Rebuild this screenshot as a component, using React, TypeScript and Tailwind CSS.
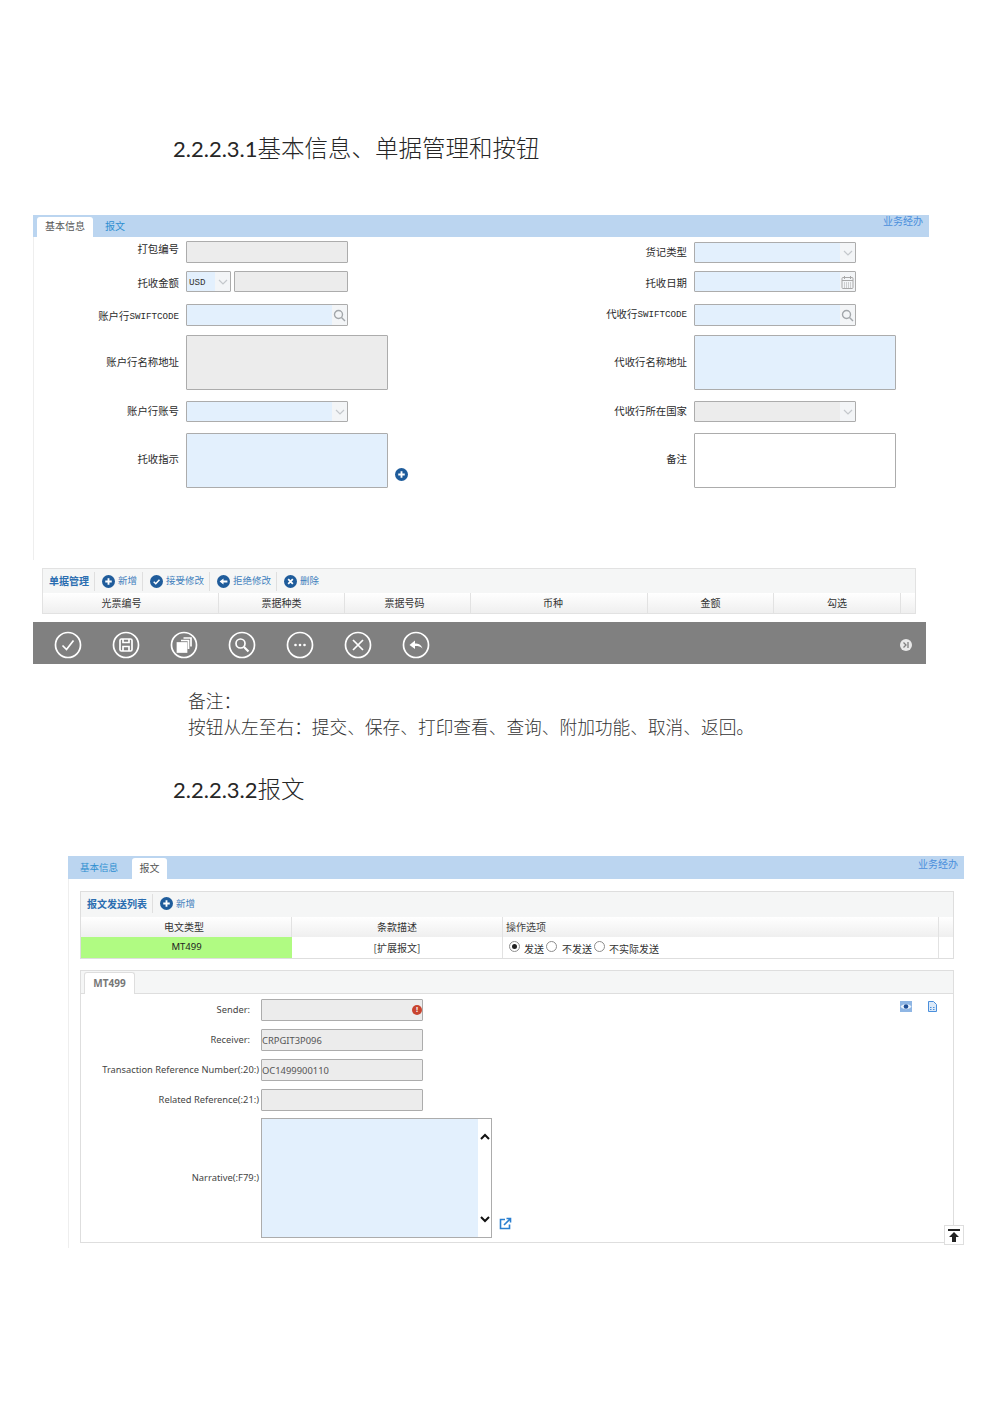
const labelCls = 'text-[10.4px] leading-none text-[#2b2b2b] whitespace-nowrap'

function Code({ children }: { children: string }) {
  return <span className="font-['Liberation_Mono',monospace] text-[9.2px]">{children}</span>
}

function Chevron() {
  return (
    <svg width="10" height="6" viewBox="0 0 10 6" fill="none" stroke="#c4c8cc" strokeWidth="1.2">
      <path d="M1 1l4 4 4-4" />
    </svg>
  )
}

function SearchGlyph() {
  return (
    <svg width="13" height="13" viewBox="0 0 13 13" fill="none" stroke="#a3a7ab" strokeWidth="1.4">
      <circle cx="5.5" cy="5.5" r="4" />
      <path d="M8.5 8.5l3.5 3.5" />
    </svg>
  )
}

function CalendarGlyph() {
  return (
    <svg width="13" height="14" viewBox="0 0 13 14" fill="none" stroke="#a8a8a8">
      <rect x="1" y="2.5" width="11" height="11" rx="1" />
      <path d="M3.5 1v3M9.5 1v3M1 5.5h11" />
      <path d="M3 8h7M3 10h7M3 12h7" strokeDasharray="1 1" />
    </svg>
  )
}

type Fill = 'gray' | 'blue' | 'white'
const fills: Record<Fill, string> = { gray: 'bg-[#ececec]', blue: 'bg-[#e3f0fd]', white: 'bg-white' }

function Box({
  fill,
  className,
  tail,
  children,
}: {
  fill: Fill
  className: string
  tail?: React.ReactNode
  children?: React.ReactNode
}) {
  return (
    <div className={`flex border border-[#acacac] rounded-[1px] shrink-0 ${fills[fill]} ${className}`}>
      <div className="flex-1 flex items-center overflow-hidden">{children}</div>
      {tail && <div className="w-[15px] bg-[#f3f5f7] flex items-center justify-center">{tail}</div>}
    </div>
  )
}

function Field({ label, nudge = '', children }: { label: React.ReactNode; nudge?: string; children: React.ReactNode }) {
  return (
    <div className="flex items-start">
      <div className={`w-[146px] h-[21px] flex items-center justify-end ${labelCls} ${nudge}`}>{label}</div>
      <div className="ml-[7px] flex items-start">{children}</div>
    </div>
  )
}

function RoundIcon({ kind, size = 13 }: { kind: 'plus' | 'check' | 'back' | 'x'; size?: number }) {
  return (
    <svg width={size} height={size} viewBox="0 0 14 14" className="shrink-0">
      <circle cx="7" cy="7" r="7" fill="#1f5c9b" />
      {kind === 'plus' && <path d="M7 3.5v7M3.5 7h7" stroke="#fff" strokeWidth="2" />}
      {kind === 'check' && <path d="M4 7.2l2.2 2.2L10.2 5" stroke="#fff" strokeWidth="1.6" fill="none" />}
      {kind === 'back' && <path d="M2.8 7L7 3.8v2h4.2v2.4H7v2z" fill="#fff" />}
      {kind === 'x' && <path d="M4.5 4.5l5 5M9.5 4.5l-5 5" stroke="#fff" strokeWidth="1.9" />}
    </svg>
  )
}

function ToolButton({ kind, text, sep = true }: { kind: 'plus' | 'check' | 'back' | 'x'; text: string; sep?: boolean }) {
  return (
    <div className={`h-[19px] flex items-center gap-[3px] pl-[7px] pr-[5px] ${sep ? 'border-r border-[#dfdfdf]' : ''}`}>
      <RoundIcon kind={kind} />
      <span className="text-[9.5px] text-[#3f7fbd] leading-none">{text}</span>
    </div>
  )
}

function HeadCell({ text, className }: { text: string; className: string }) {
  return (
    <div className={`h-full flex items-center justify-center pb-[2px] border-r border-[#e2e2e2] text-[10px] text-[#333] ${className}`}>
      {text}
    </div>
  )
}

function BarIcon({ children }: { children: React.ReactNode }) {
  return (
    <svg width="28" height="28" viewBox="0 0 28 28" fill="none" stroke="#fff" strokeWidth="1.7">
      <circle cx="14" cy="14" r="12.5" />
      {children}
    </svg>
  )
}

function Heading({ num, text, className }: { num: string; text: string; className: string }) {
  return (
    <div className={`ml-[173px] h-[30px] flex items-center text-[#262626] whitespace-nowrap ${className}`}>
      <span className="font-['Lato',sans-serif] text-[22px]">{num}</span>
      <span className="text-[23.5px] font-light">{text}</span>
    </div>
  )
}

function Radio({ on }: { on?: boolean }) {
  return (
    <span className="w-[11px] h-[11px] rounded-full border border-[#8d8d8d] bg-white flex items-center justify-center shrink-0 -mt-[3px]">
      {on && <span className="w-[5px] h-[5px] rounded-full bg-[#222]" />}
    </span>
  )
}

function SwiftRow({ label, value, wide }: { label: string; value?: string; wide?: boolean }) {
  return (
    <div className="flex items-start font-['Noto_Sans',sans-serif]">
      <div className={`w-[178px] h-[21px] flex items-center justify-end text-[9.3px] text-[#444] whitespace-nowrap ${wide ? '' : 'pr-[9px]'}`}>
        {label}
      </div>
      <Box fill="gray" className="ml-[2px] w-[162px] h-[22px]">
        <span className="pt-[2px] text-[9.4px] text-[#555]">{value}</span>
      </Box>
    </div>
  )
}

export default function App() {
  return (
    <div className="w-[1000px] h-[1415px] bg-white overflow-hidden font-['Noto_Sans_CJK_SC',sans-serif]">
      <Heading num="2.2.2.3.1" text="基本信息、单据管理和按钮" className="mt-[133px]" />

      {/* first form */}
      <div className="ml-[33px] mt-[52px] w-[896px]">
        <div className="h-[22px] bg-[#bbd5f0] flex items-end relative">
          <div className="ml-[4px] w-[56px] h-[20px] pb-[3px] bg-white rounded-t-[3px] flex items-center justify-center text-[10px] text-[#555]">
            基本信息
          </div>
          <div className="ml-[12px] h-[20px] pb-[3px] flex items-center text-[10px] text-[#2e8fd0]">报文</div>
          <span className="absolute right-[6px] top-0 text-[10px] leading-[12px] text-[#4a8fdc]">业务经办</span>
        </div>
        <div className="h-[323px] border-l border-[#eeeeee] pt-[4px]">
          <div className="-ml-px grid grid-cols-[508px_1fr] grid-rows-[30px_33px_31px_66px_32px_55px]">
            <Field label="打包编号" nudge="pb-[4px]">
              <Box fill="gray" className="w-[162px] h-[22px]" />
            </Field>
            <Field label="货记类型" nudge="pt-[2px]">
              <Box fill="blue" className="w-[162px] h-[21px] mt-px" tail={<Chevron />} />
            </Field>
            <Field label="托收金额" nudge="pt-[3px]">
              <Box fill="blue" className="w-[45px] h-[21px]" tail={<Chevron />}>
                <span className="pl-[2px] pt-[2px] font-['Liberation_Mono',monospace] text-[9.2px] text-[#333]">USD</span>
              </Box>
              <Box fill="gray" className="ml-[3px] w-[114px] h-[21px]" />
            </Field>
            <Field label="托收日期" nudge="pt-[4px]">
              <Box fill="blue" className="w-[162px] h-[21px]" tail={<CalendarGlyph />} />
            </Field>
            <Field label={<>账户行<Code>SWIFTCODE</Code></>} nudge="pt-[4px]">
              <Box fill="blue" className="w-[162px] h-[22px]" tail={<SearchGlyph />} />
            </Field>
            <Field label={<>代收行<Code>SWIFTCODE</Code></>}>
              <Box fill="blue" className="w-[162px] h-[22px]" tail={<SearchGlyph />} />
            </Field>
            <div className="flex items-center h-[55px]">
              <div className={`w-[146px] text-right ${labelCls}`}>账户行名称地址</div>
              <Box fill="gray" className="ml-[7px] w-[202px] h-[55px]" />
            </div>
            <div className="flex items-center h-[55px]">
              <div className={`w-[146px] text-right ${labelCls}`}>代收行名称地址</div>
              <Box fill="blue" className="ml-[7px] w-[202px] h-[55px]" />
            </div>
            <Field label="账户行账号">
              <Box fill="blue" className="w-[162px] h-[21px]" tail={<Chevron />} />
            </Field>
            <Field label="代收行所在国家">
              <Box fill="gray" className="w-[162px] h-[21px]" tail={<Chevron />} />
            </Field>
            <div className="flex items-center h-[55px]">
              <div className={`w-[146px] text-right pb-[2px] ${labelCls}`}>托收指示</div>
              <Box fill="blue" className="ml-[7px] w-[202px] h-[55px]" />
              <div className="ml-[7px] self-end mb-[7px]">
                <RoundIcon kind="plus" />
              </div>
            </div>
            <div className="flex items-center h-[55px]">
              <div className={`w-[146px] text-right pb-[2px] ${labelCls}`}>备注</div>
              <Box fill="white" className="ml-[7px] w-[202px] h-[55px]" />
            </div>
          </div>
        </div>
      </div>

      {/* bills panel */}
      <div className="ml-[42px] mt-[8px] w-[874px] h-[46px] border border-[#e2e2e2] bg-[#f5f6f6]">
        <div className="h-[24px] flex items-center">
          <div className="h-[19px] flex items-center pl-[6px] pr-[5px] pb-[2px] border-r border-[#dfdfdf] text-[10px] font-bold text-[#2a6db0]">
            单据管理
          </div>
          <ToolButton kind="plus" text="新增" />
          <ToolButton kind="check" text="接受修改" />
          <ToolButton kind="back" text="拒绝修改" />
          <ToolButton kind="x" text="删除" sep={false} />
        </div>
        <div className="h-[20px] flex bg-gradient-to-b from-white to-[#efefef]">
          <HeadCell text="光票编号" className="w-[176px] pr-[18px]" />
          <HeadCell text="票据种类" className="w-[126px]" />
          <HeadCell text="票据号码" className="w-[126px] pr-[6px]" />
          <HeadCell text="币种" className="w-[177px] pr-[12px]" />
          <HeadCell text="金额" className="w-[126px]" />
          <HeadCell text="勾选" className="w-[127px]" />
        </div>
      </div>

      {/* action bar */}
      <div className="ml-[33px] mt-[8px] w-[893px] h-[42px] pt-[3px] bg-[#808080] flex items-center pl-[21px] pr-[14px] gap-[30px]">
        <BarIcon><path d="M8.5 14.5l4 4 7-9" /></BarIcon>
        <BarIcon>
          <rect x="8" y="8" width="12" height="12" rx="1.5" />
          <path d="M11 8v3.5h6V8M11 20v-4.5h6V20" />
        </BarIcon>
        <BarIcon>
          <rect x="7.5" y="12" width="9" height="9" fill="#fff" />
          <path d="M11 9.5h7.5V18M13.5 7H21v8.5" />
        </BarIcon>
        <BarIcon>
          <circle cx="12.5" cy="12.5" r="4.5" />
          <path d="M16 16l4.5 4.5" strokeWidth="2.2" />
        </BarIcon>
        <BarIcon>
          <circle cx="9.5" cy="14" r="1.3" fill="#fff" stroke="none" />
          <circle cx="14" cy="14" r="1.3" fill="#fff" stroke="none" />
          <circle cx="18.5" cy="14" r="1.3" fill="#fff" stroke="none" />
        </BarIcon>
        <BarIcon><path d="M9 9l10 10M19 9L9 19" /></BarIcon>
        <BarIcon>
          <path d="M7.5 14l5.5-4.5v3c3.500 0 6 1.200 7.500 5-1.800-2-4-2.500-7.500-2.500v3z" fill="#fff" stroke="none" />
        </BarIcon>
        <svg width="12" height="12" viewBox="0 0 12 12" className="ml-auto">
          <circle cx="6" cy="6" r="6" fill="#e8e8e8" />
          <path d="M3.500 3.500L6 6 3.500 8.500" fill="none" stroke="#808080" strokeWidth="1.300" />
          <path d="M8 3v6" stroke="#808080" strokeWidth="1.300" />
        </svg>
      </div>

      {/* note */}
      <div className="ml-[188px] mt-[23px] text-[17.7px] leading-[26px] text-[#333] font-light whitespace-nowrap">
        <div>{'备注\uFF1A'}</div>
        <div>{'按钮从左至右\uFF1A提交、保存、打印查看、查询、附加功能、取消、返回。'}</div>
      </div>

      <Heading num="2.2.2.3.2" text="报文" className="mt-[35px]" />

      {/* second form */}
      <div className="ml-[68px] mt-[52px] w-[896px]">
        <div className="h-[23px] bg-[#bbd5f0] flex items-end relative">
          <div className="ml-[12px] h-[21px] pb-[2px] flex items-center text-[9.5px] text-[#2e8fd0]">基本信息</div>
          <div className="ml-[14px] w-[35px] h-[21px] pb-[2px] bg-white rounded-t-[3px] flex items-center justify-center text-[10px] text-[#555]">
            报文
          </div>
          <span className="absolute right-[6px] top-[2px] text-[10px] leading-[12px] text-[#4a8fdc]">业务经办</span>
        </div>
        <div className="border-l border-[#eeeeee] pt-[12px] pl-[12px] pb-[5px] w-[886px]">
          <div className="-ml-px h-[68px] border border-[#dedede] bg-[#f5f6f6]">
            <div className="h-[25px] pb-[2px] flex items-center">
              <div className="h-[19px] flex items-center pl-[6px] pr-[5px] border-r border-[#dfdfdf] text-[10px] font-bold text-[#2a6db0]">
                报文发送列表
              </div>
              <ToolButton kind="plus" text="新增" sep={false} />
            </div>
            <div className="h-[20px] flex bg-gradient-to-b from-white to-[#efefef]">
              <HeadCell text="电文类型" className="w-[211px] pr-[4px]" />
              <HeadCell text="条款描述" className="w-[211px]" />
              <div className="w-[436px] h-full flex items-center pl-[3px] pb-[2px] border-r border-[#e2e2e2] text-[10px] text-[#444]">
                操作选项
              </div>
            </div>
            <div className="h-[21px] flex bg-white">
              <div className="w-[211px] bg-[#b0fb82] flex items-center justify-center font-['Noto_Sans',sans-serif] text-[9.5px] text-[#222]">
                MT499
              </div>
              <div className="w-[211px] border-r border-[#e2e2e2] flex items-center justify-center text-[10px] text-[#333]">
                [扩展报文]
              </div>
              <div className="w-[436px] border-r border-[#e2e2e2] flex items-center pl-[6px] text-[10px] text-[#333]">
                <Radio on />
                <span className="ml-[4px] pt-[2px]">发送</span>
                <span className="ml-[2px]"><Radio /></span>
                <span className="ml-[5px] pt-[2px]">不发送</span>
                <span className="ml-[2px]"><Radio /></span>
                <span className="ml-[4px] pt-[2px]">不实际发送</span>
              </div>
            </div>
          </div>

          <div className="relative -ml-px mt-[11px] h-[273px] border border-[#dedede]">
            <div className="h-[23px] bg-[#f5f6f6] border-b border-[#dedede] flex items-end pl-[3px]">
              <div className="w-[51px] h-[22px] -mb-px bg-white border border-b-0 border-[#dedede] rounded-t-[3px] flex items-center justify-center font-['Noto_Sans',sans-serif] text-[10px] font-bold text-[#777]">
                MT499
              </div>
            </div>
            <div className="pt-[5px] flex flex-col gap-[8px]">
              <div className="flex items-start">
                <div className="w-[178px] h-[21px] flex items-center justify-end pr-[9px] text-[9.3px] text-[#444] font-['Noto_Sans',sans-serif]">
                  Sender:
                </div>
                <Box fill="gray" className="ml-[2px] w-[162px] h-[22px]">
                  <span className="ml-auto w-[10px] h-[10px] rounded-full bg-[#c8442f] flex items-center justify-center text-white text-[8px] font-bold leading-none font-['Liberation_Sans',sans-serif]">
                    !
                  </span>
                </Box>
                <div className="ml-auto mr-[16px] mt-[2px] flex items-center gap-[16px]">
                  <svg width="12" height="11" viewBox="0 0 12 11">
                    <rect width="12" height="11" fill="#8fb6e4" />
                    <path d="M0.500 5.500C3 2 9 2 11.500 5.500 9 9 3 9 0.500 5.500z" fill="#e8f1fb" />
                    <circle cx="6" cy="5.500" r="2.300" fill="#1f4f96" />
                  </svg>
                  <svg width="9" height="11" viewBox="0 0 9 11" fill="#dbe9f8" stroke="#4a8fdc">
                    <path d="M.5.500h5l3 3v7h-8z" />
                    <path d="M2 6.500h1.500M2 8.500h1.500M5 6.500h1.500M5 8.500h1.500" />
                  </svg>
                </div>
              </div>
              <SwiftRow label="Receiver:" value="CRPGIT3P096" />
              <SwiftRow wide label="Transaction Reference Number(:20:)" value="OC1499900110" />
              <SwiftRow wide label="Related Reference(:21:)" />
              <div className="-mt-px flex items-center">
                <div className="w-[178px] text-right text-[9.4px] text-[#444] font-['Noto_Sans',sans-serif]">Narrative(:F79:)</div>
                <div className="ml-[2px] w-[231px] h-[120px] border border-[#acacac] bg-white flex shrink-0">
                  <div className="w-[216px] bg-[#e3f0fd]" />
                  <div className="flex-1 flex flex-col items-center justify-between pt-[14px] pb-[14px]">
                    <svg width="10" height="7" viewBox="0 0 10 7" fill="none" stroke="#111" strokeWidth="2"><path d="M1 6l4-4 4 4" /></svg>
                    <svg width="10" height="7" viewBox="0 0 10 7" fill="none" stroke="#111" strokeWidth="2"><path d="M1 1l4 4 4-4" /></svg>
                  </div>
                </div>
                <svg width="13" height="13" viewBox="0 0 13 13" fill="none" stroke="#2a7fd0" strokeWidth="1.600" className="ml-[7px] self-end mb-[8px]">
                  <path d="M6 2.500H1.500v9h9V7.500" />
                  <path d="M5 8l6-6M7.500 1.500h4v4" />
                </svg>
              </div>
            </div>
            <div className="absolute right-[-11px] bottom-[-3px] w-[20px] h-[20px] bg-white border border-[#dedede] flex items-center justify-center">
              <svg width="12" height="13" viewBox="0 0 12 13" fill="#222">
                <rect x="0" y="0" width="12" height="2" />
                <path d="M6 3l5 5H8v5H4V8H1z" />
              </svg>
            </div>
          </div>
        </div>
      </div>
    </div>
  )
}
